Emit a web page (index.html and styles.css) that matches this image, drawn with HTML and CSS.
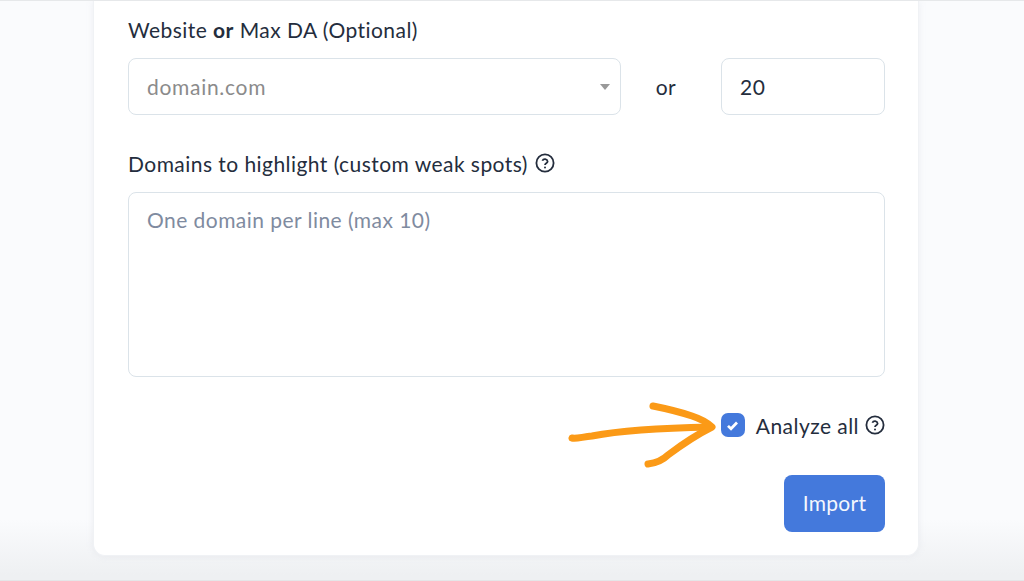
FILE: index.html
```html
<!DOCTYPE html>
<html lang="en">
  <head>
    <meta charset="UTF-8" />
    <meta name="viewport" content="width=device-width, initial-scale=1.0" />
    <title>Import</title>
    <link rel="stylesheet" href="styles.css">
  </head>
  <body>
    <section class="card">
      <div class="label"><span>Website <b>or</b> Max DA (Optional)</span></div>
      <div class="site-row">
        <div class="field select">
          <span class="muted">domain.com</span>
          <span class="caret"></span>
        </div>
        <span class="or">or</span>
        <div class="field max-da">20</div>
      </div>

      <div class="label label-highlight">
        <span>Domains to highlight (custom weak spots)</span>
        <svg class="help" viewBox="0 0 20 20"><circle cx="10" cy="10" r="8.6"/><path d="M7.4 7.8a2.7 2.7 0 0 1 5.2.6c0 1.8-2.6 2-2.6 3.6"/><circle class="dot" cx="10" cy="14.6" r="1"/></svg>
      </div>
      <div class="field textarea">One domain per line (max 10)</div>

      <div class="analyze">
        <span class="check">
          <svg viewBox="0 0 12 12"><path d="M2.4 6.3l2.4 2.3 4.8-5"/></svg>
        </span>
        <span>Analyze all</span>
        <svg class="help" viewBox="0 0 20 20"><circle cx="10" cy="10" r="8.6"/><path d="M7.4 7.8a2.7 2.7 0 0 1 5.2.6c0 1.8-2.6 2-2.6 3.6"/><circle class="dot" cx="10" cy="14.6" r="1"/></svg>
      </div>

      <div class="actions">
        <button class="import-btn">Import</button>
      </div>

      <!-- hand drawn arrow pointing at the checkbox -->
      <svg class="arrow" viewBox="0 0 150 68">
        <path d="M4 36C8 37 14 35 24 34C50 29 90 26 142 25"/>
        <path d="M85 4C95 6 112 10 124 14C133 17 140 21 144 25C130 32 116 41 100 53C95 58 88 61 80 62"/>
      </svg>
    </section>
  </body>
</html>
```

FILE: styles.css
```css
* {
  margin: 0;
  padding: 0;
  box-sizing: border-box;
}

html,
body {
  height: 581px;
  overflow: hidden;
}

body {
  background: linear-gradient(#fafbfd 0, #fafbfd 520px, #eef0f2 575px);
  border-top: 1px solid #e6e8ea;
  border-bottom: 1px solid #e4e6e8;
  font-family: "Lato", "Open Sans", sans-serif;
  font-size: 21px;
  letter-spacing: 0.45px;
  color: #242d3d;
}

.card {
  position: relative;
  width: 826px;
  height: 555px;
  margin-left: 93px;
  padding: 14px 33px 0 34px;
  background-color: #fff;
  border: 1px solid #f0f2f5;
  border-top: 0;
  border-radius: 0 0 12px 12px;
  box-shadow: 0 0 6px rgba(200, 205, 215, 0.25);
}

.label {
  display: flex;
  align-items: center;
  gap: 7px;
  height: 28px;
}

.label b {
  font-weight: 700;
}

.site-row {
  display: flex;
  align-items: center;
  margin-top: 15px;
}

.field {
  background-color: #fff;
  border: 1.5px solid #dbe3e9;
  border-radius: 8px;
  padding: 0 18px;
}

.select {
  display: flex;
  align-items: center;
  justify-content: space-between;
  width: 493px;
  height: 57px;
  padding-right: 10px;
}

.muted {
  color: #8b8b8b;
  letter-spacing: 0.7px;
}

.caret {
  width: 0;
  height: 0;
  border-left: 5.5px solid transparent;
  border-right: 5.5px solid transparent;
  border-top: 6px solid #999;
}

.or {
  width: 100px;
  padding-right: 10px;
  text-align: center;
}

.max-da {
  display: flex;
  align-items: center;
  width: 164px;
  height: 57px;
}

.label-highlight {
  margin-top: 34px;
}

.textarea {
  height: 185px;
  margin-top: 15px;
  padding-top: 14px;
  color: #7f8ba0;
}

.help {
  width: 20px;
  height: 20px;
  fill: none;
  stroke: #242d3d;
  stroke-width: 1.8;
  flex-shrink: 0;
}

.help .dot {
  fill: #242d3d;
  stroke: none;
}

.analyze {
  display: flex;
  align-items: center;
  justify-content: flex-end;
  height: 26px;
  margin-top: 35px;
}

.analyze .help {
  margin-left: 6px;
}

.check {
  display: flex;
  align-items: center;
  justify-content: center;
  width: 24px;
  height: 24px;
  margin-right: 11px;
  background-color: #4479dc;
  border-radius: 7px;
}

.check svg {
  width: 15px;
  height: 15px;
  fill: none;
  stroke: #fff;
  stroke-width: 2.2;
}

.actions {
  display: flex;
  justify-content: flex-end;
  margin-top: 37px;
}

.import-btn {
  width: 101px;
  height: 57px;
  padding-bottom: 2px;
  background-color: #4479dc;
  border: 0;
  border-radius: 8px;
  color: #f4f7fd;
  font-family: inherit;
  font-size: 21px;
  letter-spacing: 0.3px;
}

.arrow {
  position: absolute;
  left: 474px;
  top: 401px;
  width: 150px;
  height: 68px;
  fill: none;
  stroke: #fb9a17;
  stroke-width: 7;
  stroke-linecap: round;
  stroke-linejoin: round;
}
```
